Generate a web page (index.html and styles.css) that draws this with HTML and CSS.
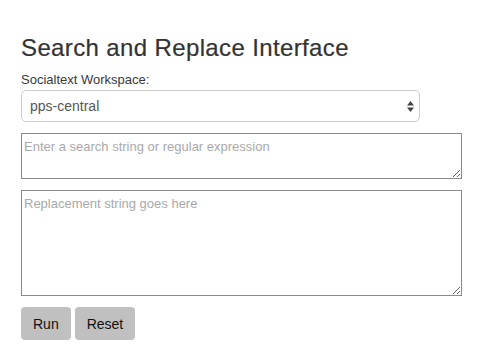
FILE: index.html
```html
<!DOCTYPE html>
<html lang="en">
  <head>
    <meta charset="UTF-8" />
    <title>Search and Replace Interface</title>
    <link rel="stylesheet" href="styles.css">
  </head>
  <body>
    <div class="page">
      <h3>Search and Replace Interface</h3>
      <form id="replace-form">
        <label for="workspace">Socialtext Workspace:</label>
        <div class="select-wrap">
          <select id="workspace">
            <option>pps-central</option>
          </select>
          <svg class="arrows" width="7" height="11" viewBox="0 0 7 11">
            <path d="M3.5 0 L7 4.5 L0 4.5 Z M3.5 11 L7 6.5 L0 6.5 Z" fill="#444"/>
          </svg>
        </div>
        <textarea id="search" class="search" placeholder="Enter a search string or regular expression"></textarea>
        <textarea id="replace" class="replace" placeholder="Replacement string goes here"></textarea>
        <div class="buttons">
          <button type="submit">Run</button>
          <button type="reset">Reset</button>
        </div>
      </form>
    </div>
  </body>
</html>
```

FILE: styles.css
```css
body {
  margin: 0;
  font-family: "Liberation Sans", Arial, sans-serif;
  color: #333;
  background-color: #fff;
}
.page {
  padding: 34px 20px 0 21px;
}
h3 {
  margin: 0 0 9px 0;
  font-size: 24px;
  font-weight: normal;
  line-height: 28px;
  letter-spacing: 0.37px;
  -webkit-text-stroke: 0.2px #333;
}
form {
  display: flex;
  flex-direction: column;
}
label {
  font-size: 13px;
  line-height: 17px;
  margin-bottom: 2px;
  color: #3a3a3a;
}
.select-wrap {
  position: relative;
  width: 399px;
  margin-bottom: 11px;
}
select {
  appearance: none;
  display: block;
  width: 100%;
  height: 32px;
  padding: 0 8px;
  border: 1px solid #ccc;
  border-radius: 5px;
  background-color: #fff;
  font-family: "Liberation Sans", Arial, sans-serif;
  font-size: 14px;
  color: #555;
}
.arrows {
  position: absolute;
  right: 6px;
  top: 11px;
}
textarea {
  display: block;
  box-sizing: border-box;
  width: 441px;
  border: 1px solid #8a8a8a;
  padding: 5px 2px 4px 2px;
  font-family: "Liberation Sans", Arial, sans-serif;
  font-size: 13px;
  margin: 0 0 11px 0;
}
textarea::placeholder {
  color: #a9a9a9;
}
.search {
  height: 46px;
}
.replace {
  height: 106px;
}
.buttons {
  display: flex;
  gap: 4px;
}
button {
  height: 33px;
  padding: 0 12px;
  background-color: #c0c0c0;
  border: none;
  border-radius: 4px;
  font-family: "Liberation Sans", Arial, sans-serif;
  font-size: 14px;
  color: #111;
  cursor: pointer;
}
```
